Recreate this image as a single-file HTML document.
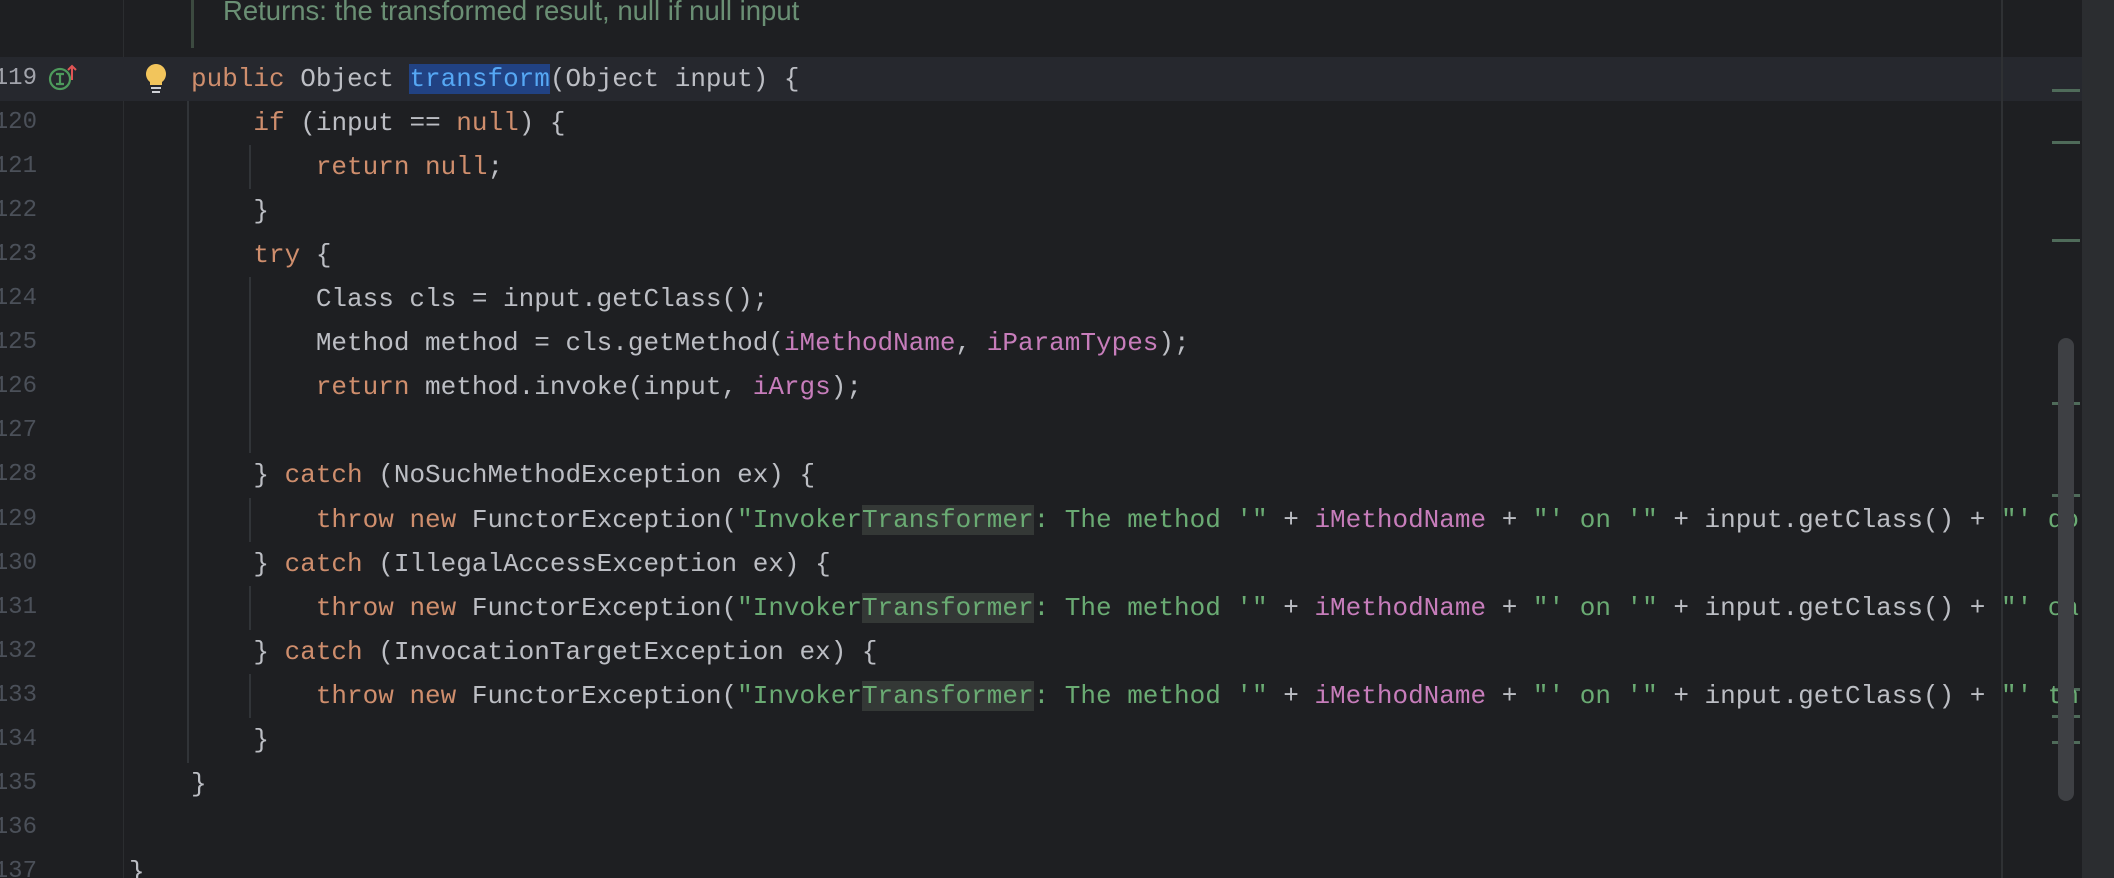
<!DOCTYPE html>
<html><head><meta charset="utf-8"><style>
html,body{margin:0;padding:0;background:#1e1f22;width:2114px;height:878px;overflow:hidden;position:relative}
.ln{position:absolute;left:-23px;width:60px;text-align:right;font:24px "Liberation Mono",monospace;color:#4b5059;line-height:44px;white-space:nowrap;overflow:visible}
.c{position:absolute;left:191px;font:26px "Liberation Mono",monospace;color:#bcbec4;line-height:44px;white-space:pre;margin:0}
.k{color:#cf8e6d}.f{color:#c77dbb}.s{color:#6aab73}.h{background:#343836}
.g{position:absolute;width:2px;background:#313438}
.m{position:absolute;left:2052px;width:28px;height:3px;background:#4f6b5a}
</style></head><body>
<div style="position:absolute;left:123px;top:0;width:1px;height:878px;background:#2b2d30"></div>
<div style="position:absolute;left:0;top:57px;width:2082px;height:44px;background:#26282e"></div>
<div style="position:absolute;left:191px;top:0;width:3px;height:48px;background:#3c4a40"></div>
<div style="position:absolute;left:223px;top:-6px;font:27.5px 'Liberation Sans',sans-serif;color:#6a8f74;line-height:34px;white-space:nowrap">Returns: the transformed result, null if null input</div>
<div style="position:absolute;left:2001px;top:0;width:2px;height:878px;background:#2f3134"></div>
<div class="m" style="top:89px"></div><div class="m" style="top:141px"></div><div class="m" style="top:239px"></div><div class="m" style="top:402px"></div><div class="m" style="top:494px"></div><div class="m" style="top:688px"></div><div class="m" style="top:715px"></div><div class="m" style="top:741px"></div>
<div class="g" style="left:187px;top:101px;height:662px"></div>
<div class="g" style="left:249px;top:145px;height:44px"></div>
<div class="g" style="left:249px;top:277px;height:176px"></div>
<div class="g" style="left:249px;top:498px;height:44px"></div>
<div class="g" style="left:249px;top:586px;height:44px"></div>
<div class="g" style="left:249px;top:674px;height:44px"></div>
<div class="ln" style="top:57px;color:#a1a3ab">119</div>
<div class="ln" style="top:101px">120</div><div class="ln" style="top:145px">121</div><div class="ln" style="top:189px">122</div><div class="ln" style="top:233px">123</div><div class="ln" style="top:277px">124</div><div class="ln" style="top:321px">125</div><div class="ln" style="top:365px">126</div><div class="ln" style="top:409px">127</div><div class="ln" style="top:453px">128</div><div class="ln" style="top:498px">129</div><div class="ln" style="top:542px">130</div><div class="ln" style="top:586px">131</div><div class="ln" style="top:630px">132</div><div class="ln" style="top:674px">133</div><div class="ln" style="top:718px">134</div><div class="ln" style="top:762px">135</div><div class="ln" style="top:806px">136</div><div class="ln" style="top:850px">137</div>
<svg style="position:absolute;left:48px;top:62px" width="30" height="32" viewBox="0 0 30 32"><circle cx="12" cy="17" r="10" fill="none" stroke="#4e9a5c" stroke-width="2.2"/><path d="M8 12h8M8 22h8M12 12v10" stroke="#4e9a5c" stroke-width="2.2"/><path d="M24 18V4M20 8l4-4 4 4" stroke="#e05555" stroke-width="2" fill="none"/></svg>
<svg style="position:absolute;left:144px;top:62px" width="24" height="32" viewBox="0 0 24 32"><path d="M12 2a10 10 0 0 0-6 18v3h12v-3a10 10 0 0 0-6-18z" fill="#f2c55c"/><rect x="7" y="25" width="10" height="2" fill="#cfd1d6"/><rect x="8" y="29" width="8" height="2" fill="#cfd1d6"/></svg>
<pre class="c" style="top:57px"><span class="k">public</span> Object <span style="background:#214283;color:#56a8f5">transform</span>(Object input) {</pre>
<pre class="c" style="top:101px">    <span class="k">if</span> (input == <span class="k">null</span>) {</pre>
<pre class="c" style="top:145px">        <span class="k">return null</span>;</pre>
<pre class="c" style="top:189px">    }</pre>
<pre class="c" style="top:233px">    <span class="k">try</span> {</pre>
<pre class="c" style="top:277px">        Class cls = input.getClass();</pre>
<pre class="c" style="top:321px">        Method method = cls.getMethod(<span class="f">iMethodName</span>, <span class="f">iParamTypes</span>);</pre>
<pre class="c" style="top:365px">        <span class="k">return</span> method.invoke(input, <span class="f">iArgs</span>);</pre>
<pre class="c" style="top:453px">    } <span class="k">catch</span> (NoSuchMethodException ex) {</pre>
<pre class="c" style="top:498px">        <span class="k">throw new</span> FunctorException(<span class="s">"Invoker<span class="h">Transformer</span>: The method '"</span> + <span class="f">iMethodName</span> + <span class="s">"' on '"</span> + input.getClass() + <span class="s">"' do</span></pre>
<pre class="c" style="top:542px">    } <span class="k">catch</span> (IllegalAccessException ex) {</pre>
<pre class="c" style="top:586px">        <span class="k">throw new</span> FunctorException(<span class="s">"Invoker<span class="h">Transformer</span>: The method '"</span> + <span class="f">iMethodName</span> + <span class="s">"' on '"</span> + input.getClass() + <span class="s">"' ca</span></pre>
<pre class="c" style="top:630px">    } <span class="k">catch</span> (InvocationTargetException ex) {</pre>
<pre class="c" style="top:674px">        <span class="k">throw new</span> FunctorException(<span class="s">"Invoker<span class="h">Transformer</span>: The method '"</span> + <span class="f">iMethodName</span> + <span class="s">"' on '"</span> + input.getClass() + <span class="s">"' th</span></pre>
<pre class="c" style="top:718px">    }</pre>
<pre class="c" style="top:762px">}</pre>
<pre class="c" style="top:850px;left:129px">}</pre>
<div style="position:absolute;left:2082px;top:0;width:32px;height:878px;background:#2b2d30"></div>
<div style="position:absolute;left:2058px;top:338px;width:16px;height:463px;border-radius:8px;background:#3e4044"></div>
</body></html>
